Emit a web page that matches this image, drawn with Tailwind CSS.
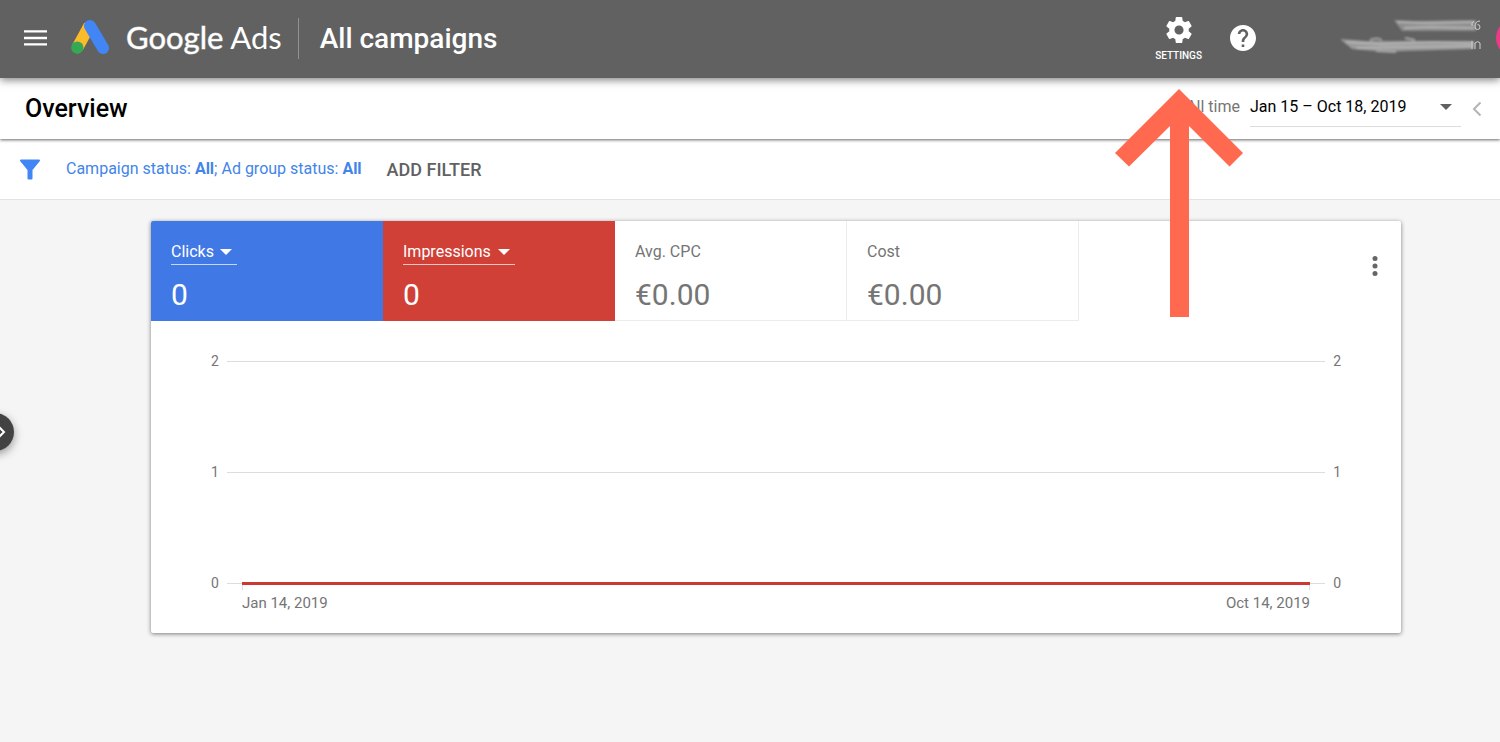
<!DOCTYPE html>
<html lang="en">
<head>
  <meta charset="UTF-8">
  <meta name="viewport" content="width=device-width, initial-scale=1.0">
  <title>Overview - Google Ads</title>
  <script src="https://cdn.jsdelivr.net/npm/@tailwindcss/browser@4"></script>
</head>
<body class="relative min-h-screen overflow-x-hidden bg-[#f5f5f5] font-[Roboto,sans-serif] text-base text-[#757575]">

  <!-- Top bar -->
  <header class="relative z-20 flex h-[78px] items-center bg-[#616161] pb-[2px] pl-6 text-white shadow-[0_2px_8px_rgba(0,0,0,0.5)]">
    <button aria-label="Main menu" class="mr-6">
      <svg class="h-4 w-[23px]" viewBox="0 0 23 16" fill="currentColor"><path d="M0 .2h23v2.4H0zM0 6.8h23v2.4H0zM0 13.2h23v2.4H0z"/></svg>
    </button>
    <a href="#" class="flex items-center gap-4 pb-[2px]">
      <svg class="h-9 w-[39px]" viewBox="0 0 39 36" aria-hidden="true">
        <path d="M18.500 6.500L6.500 28.500" stroke="#fbbc2c" stroke-width="12"/>
        <path d="M19 7L32 29" stroke="#4285f4" stroke-width="12" stroke-linecap="round"/>
        <circle cx="6.300" cy="28.700" r="6.200" fill="#34a853"/>
      </svg>
      <span class="font-[Lato,sans-serif] text-[31px] leading-9"><span class="[-webkit-text-stroke:1px_#ffffff80]">Google</span> Ads</span>
    </a>
    <div class="mr-[21px] ml-4 h-[41px] w-px bg-[#919191]"></div>
    <h2 class="pt-[2px] text-[28px] font-medium">All campaigns</h2>

    <div class="ml-auto flex items-center">
      <button class="mr-7 flex flex-col items-center gap-[5px] pt-[5px] text-[10px] leading-4 font-medium">
        <svg class="h-[26px] w-[26px]" viewBox="2 2 20 20" fill="currentColor"><path d="M19.430 12.980c.04-.32.07-.64.07-.98s-.03-.66-.07-.98l2.110-1.650c.19-.15.24-.42.12-.64l-2-3.460c-.12-.22-.39-.3-.61-.22l-2.490 1c-.52-.4-1.080-.73-1.690-.98l-.38-2.650C14.460 2.180 14.250 2 14 2h-4c-.25 0-.46.18-.49.42l-.38 2.650c-.61.25-1.170.59-1.690.98l-2.490-1c-.23-.09-.49 0-.61.22l-2 3.460c-.13.22-.07.49.12.64l2.110 1.650c-.04.32-.07.65-.07.98s.03.66.07.98l-2.110 1.650c-.19.15-.24.42-.12.64l2 3.460c.12.22.39.3.61.22l2.490-1c.52.4 1.080.73 1.690.98l.38 2.650c.03.24.24.42.49.42h4c.25 0 .46-.18.49-.42l.38-2.650c.61-.25 1.170-.59 1.690-.98l2.490 1c.23.09.49 0 .61-.22l2-3.460c.12-.22.07-.49-.12-.64l-2.110-1.650zM12 15.500c-1.930 0-3.500-1.570-3.500-3.500s1.570-3.500 3.500-3.500 3.500 1.570 3.500 3.500-1.570 3.500-3.500 3.500z"/></svg>
        SETTINGS
      </button>
      <button aria-label="Help" class="mr-[84px]">
        <svg class="h-[26px] w-[26px]" viewBox="2 2 20 20" fill="currentColor"><path d="M12 2C6.480 2 2 6.480 2 12s4.480 10 10 10 10-4.480 10-10S17.520 2 12 2zm1 17h-2v-2h2v2zm2.070-7.750l-.9.920C13.450 12.900 13 13.500 13 15h-2v-.5c0-1.100.45-2.100 1.170-2.830l1.240-1.260c.37-.36.59-.86.59-1.410 0-1.100-.9-2-2-2s-2 .9-2 2H8c0-2.210 1.790-4 4-4s4 1.790 4 4c0 .88-.36 1.680-.93 2.250z"/></svg>
      </button>
      <!-- Account details, smudged out -->
      <svg class="mr-[14px] h-10 w-[142px]" viewBox="1340 18 142 40" fill="none" aria-hidden="true">
        <g class="blur-[1px]">
          <path d="M1394 20l20 1 62-1v11l-52 0-22 0z" fill="#8e8e8e"/>
          <path d="M1340 39l26 2 96 0 12 0v8l-68 2-20 1-34-3z" fill="#9a9a9a"/>
          <path d="M1397 22l30 1 46-1M1404 28l26-1 44 1M1346 42l36 2 50-2 42 1M1356 48l46-1 70-1" stroke="#b4b4b4" stroke-width="2"/>
          <path d="M1370 40q7-3 12 0M1405 38l10 2M1376 51l20 1" stroke="#a8a8a8" stroke-width="2"/>
        </g>
        <path d="M1474 21q-3 2-2 5M1480 21q-5 0-5 6a2.500 2.500 0 1 0 2.500-2.500M1472 49v-8M1475 49v-6q3-3 5 0v6" stroke="#d0d0d0" stroke-width="1"/>
      </svg>
      <button aria-label="Account" class="w-1 overflow-hidden">
        <span class="block h-[38px] w-[38px] rounded-full bg-[#ec3a86]"></span>
      </button>
    </div>
  </header>

  <!-- Title and date range -->
  <div class="relative z-10 flex h-[61px] items-center bg-white pr-[18px] pl-[25px] shadow-[0_1px_3px_rgba(0,0,0,0.6)]">
    <h1 class="text-[25px] font-medium text-black">Overview</h1>
    <span class="ml-auto mr-[10px] pb-1">All time</span>
    <button class="mr-[11px] flex h-9 w-[211px] items-center justify-between border-b border-[#dcdcdc] pr-[9px] pb-[3px] text-black">
      Jan 15 – Oct 18, 2019
      <svg class="h-[6px] w-3 text-[#616161]" viewBox="0 0 12 6" fill="currentColor"><path d="M0 0h12L6 6z"/></svg>
    </button>
    <button aria-label="Previous period">
      <svg class="h-4 w-[10px]" viewBox="0 0 10 16" fill="none" stroke="#b4b4b4" stroke-width="2"><path d="M8.500 1.500L2 8l6.500 6.500"/></svg>
    </button>
  </div>

  <!-- Filters -->
  <div class="flex h-[61px] items-center border-b border-[#e2e2e2] bg-white pl-5">
    <svg class="mr-[26px] h-[21px] w-5" viewBox="0 0 20 21" fill="#4285f4" aria-hidden="true"><path d="M1 .5h18q1.600.3.700 1.800L12.500 11v8.500q0 1-1 1h-3q-1 0-1-1V11L.3 2.300Q-.6.8 1 .5z"/></svg>
    <button class="mr-[25px] text-[#4285e8]">Campaign status: <b>All</b>; Ad group status: <b>All</b></button>
    <button class="text-[18px] font-medium text-[#616161]">ADD FILTER</button>
  </div>

  <main class="pt-[21px] pr-[99px] pb-[21px] pl-[151px]">
    <section class="rounded-xs bg-white pb-5 shadow-[0_1px_4px_rgba(0,0,0,0.5)]">
      <div class="flex h-[100px] overflow-hidden rounded-t-xs">
        <div class="w-[232px] bg-[#4079e5] px-5 pt-[18px] text-white">
          <div class="relative w-[66px] border-b border-white/70">
            <select aria-label="First metric" class="block h-[25px] w-full appearance-none">
              <option>Clicks</option>
            </select>
            <svg class="pointer-events-none absolute top-[10px] right-[5px] h-[6px] w-3" viewBox="0 0 12 6" fill="currentColor"><path d="M0 0h12L6 6z"/></svg>
          </div>
          <p class="mt-3 text-[30px] leading-9">0</p>
        </div>
        <div class="w-[232px] bg-[#d04037] px-5 pt-[18px] text-white">
          <div class="relative w-[112px] border-b border-white/70">
            <select aria-label="Second metric" class="block h-[25px] w-full appearance-none">
              <option>Impressions</option>
            </select>
            <svg class="pointer-events-none absolute top-[10px] right-[5px] h-[6px] w-3" viewBox="0 0 12 6" fill="currentColor"><path d="M0 0h12L6 6z"/></svg>
          </div>
          <p class="mt-3 text-[30px] leading-9">0</p>
        </div>
        <div class="w-[232px] border-r border-b border-[#ececec] px-5 pt-[18px]">
          <p class="leading-[26px]">Avg. CPC</p>
          <p class="mt-3 text-[30px] leading-9">€0.00</p>
        </div>
        <div class="w-[232px] border-r border-b border-[#ececec] px-5 pt-[18px]">
          <p class="leading-[26px]">Cost</p>
          <p class="mt-3 text-[30px] leading-9">€0.00</p>
        </div>
        <button aria-label="More options" class="mr-[23px] ml-auto self-center pb-[10px]">
          <svg class="h-5 w-[6px]" viewBox="0 0 6 20" fill="#666"><circle cx="3" cy="2.500" r="2.500"/><circle cx="3" cy="10" r="2.500"/><circle cx="3" cy="17.500" r="2.500"/></svg>
        </button>
      </div>

      <!-- Chart -->
      <div class="flex flex-col gap-[91px] px-[60px] pt-[30px] text-sm leading-5">
        <div class="flex items-center">
          <span class="w-4">2</span>
          <div class="h-px flex-1 bg-[#dcdcdc]"></div>
          <span class="w-4 text-right">2</span>
        </div>
        <div class="flex items-center">
          <span class="w-4">1</span>
          <div class="h-px flex-1 bg-[#dcdcdc]"></div>
          <span class="w-4 text-right">1</span>
        </div>
        <div class="flex items-center">
          <span class="w-4">0</span>
          <div class="h-px w-[15px] bg-[#dcdcdc]"></div>
          <div class="relative h-[3px] flex-1 bg-[#c93a32]">
            <span class="absolute top-[3px] left-0 h-[5px] w-px bg-[#dcdcdc]"></span>
            <span class="absolute top-[3px] right-0 h-[5px] w-px bg-[#dcdcdc]"></span>
          </div>
          <div class="h-px w-[15px] bg-[#dcdcdc]"></div>
          <span class="w-4 text-right">0</span>
        </div>
      </div>
      <div class="flex justify-between px-[91px] text-[15px] leading-5">
        <span>Jan 14, 2019</span>
        <span>Oct 14, 2019</span>
      </div>
    </section>
  </main>

  <!-- Side panel handle -->
  <button aria-label="Open side panel" class="absolute top-[413px] -left-6 flex h-[38px] w-[38px] items-center justify-end rounded-full bg-[#424242] pr-2 shadow-[0_3px_10px_rgba(0,0,0,0.4)]">
    <svg class="h-3 w-2" viewBox="0 0 8 12" fill="none" stroke="#fff" stroke-width="2"><path d="M1 1l5 5-5 5"/></svg>
  </button>

  <!-- Arrow pointing at Settings -->
  <svg class="pointer-events-none absolute top-[89px] right-[257px] z-30 h-[228px] w-32" viewBox="0 0 128 228" fill="#ff6950" aria-hidden="true">
    <path d="M64 0l64 64-13.500 13.500L74 37v191H55V37L14 77.500 0 64z"/>
  </svg>
</body>
</html>
